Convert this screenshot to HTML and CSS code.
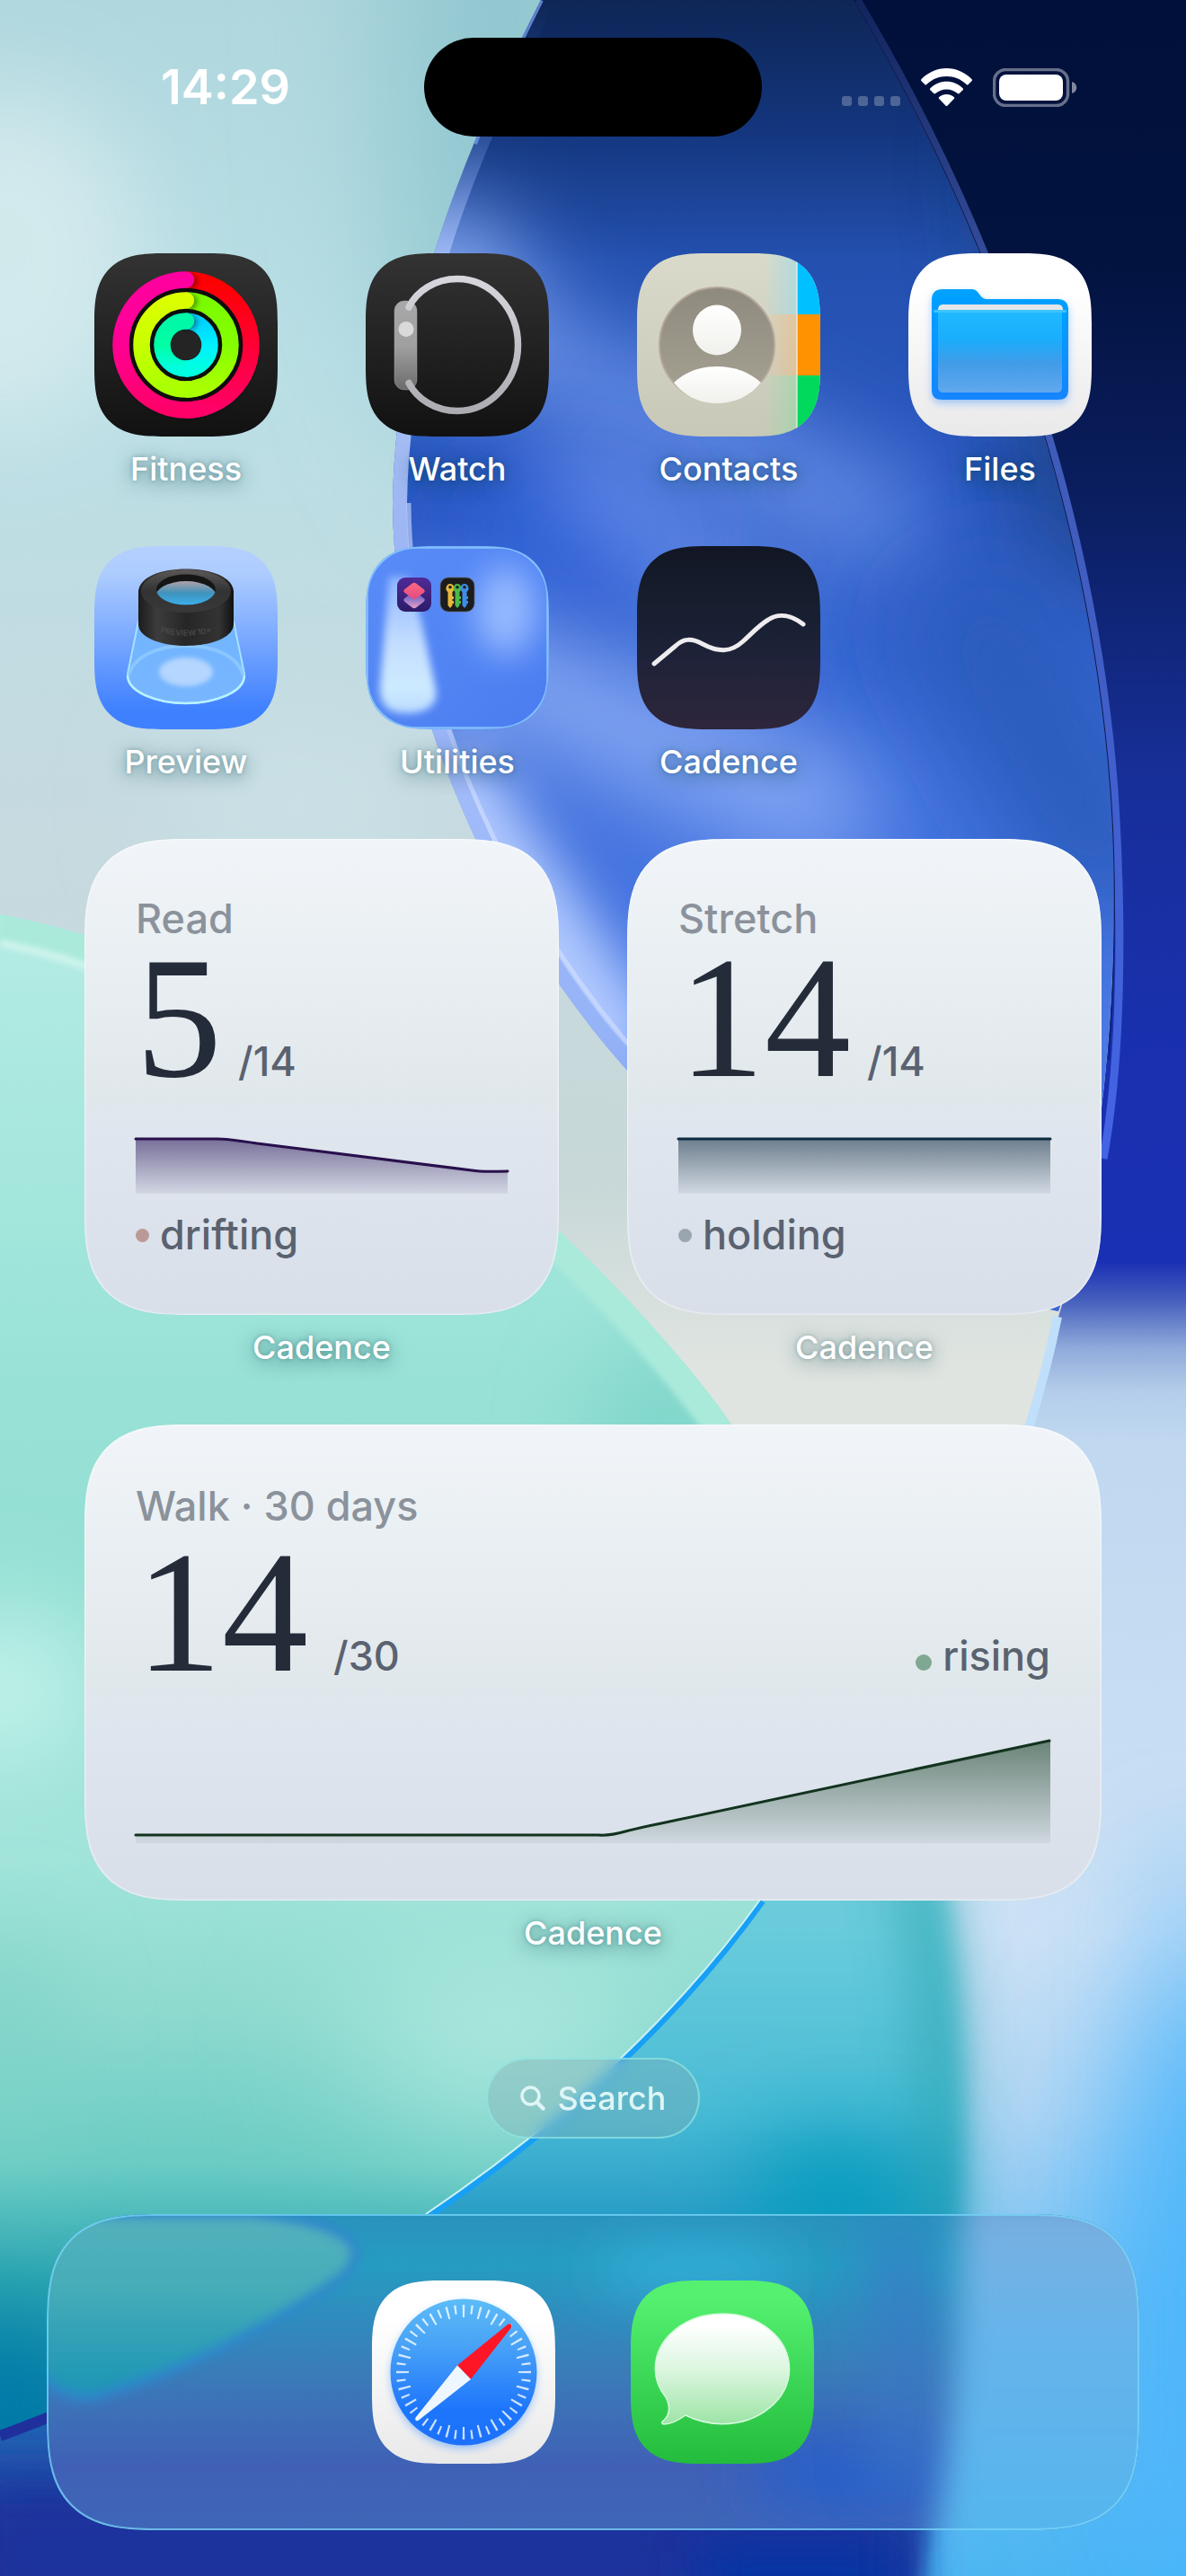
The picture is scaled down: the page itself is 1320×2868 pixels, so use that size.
FILE: index.html
```html
<!DOCTYPE html>
<html lang="en">
<head>
<meta charset="utf-8">
<meta name="viewport" content="width=device-width, initial-scale=1">
<title>Home Screen</title>
<link rel="stylesheet" href="styles.css">
</head>
<body>
<div class="screen">

<svg class="wallpaper" viewBox="0 0 1320 2868" preserveAspectRatio="none" aria-hidden="true">
  <defs>
    <linearGradient id="wBase" x1="0" y1="0" x2="0" y2="1"><stop offset="0" stop-color="#b0d7de"/><stop offset=".14" stop-color="#b9dfe5"/><stop offset=".32" stop-color="#c6dae0"/><stop offset=".46" stop-color="#c8d8d8"/><stop offset=".53" stop-color="#dfe4e0"/><stop offset="1" stop-color="#e6eae6"/></linearGradient>
    <linearGradient id="wRight" x1="0" y1="0" x2="0" y2="1"><stop offset="0" stop-color="#00103a"/><stop offset=".1" stop-color="#02133f"/><stop offset=".2" stop-color="#0b1f62"/><stop offset=".3" stop-color="#172f98"/><stop offset=".4" stop-color="#1930ae"/><stop offset=".49" stop-color="#1a30b4"/><stop offset=".505" stop-color="#4660bd"/><stop offset=".523" stop-color="#8fa9da"/><stop offset=".54" stop-color="#b4cdea"/><stop offset=".56" stop-color="#c0d8f0"/><stop offset=".75" stop-color="#cce1f5"/><stop offset=".82" stop-color="#b3d6f3"/><stop offset=".9" stop-color="#74c0f3"/><stop offset="1" stop-color="#4db6f2"/></linearGradient>
    <linearGradient id="wOval" x1="0" y1="0" x2="0" y2="1"><stop offset="0" stop-color="#0e2656"/><stop offset=".1" stop-color="#14367e"/><stop offset=".2" stop-color="#2451b0"/><stop offset=".4" stop-color="#2a58c4"/><stop offset=".6" stop-color="#3f6fdc"/><stop offset=".8" stop-color="#4c79e4"/><stop offset="1" stop-color="#3a66d4"/></linearGradient>
    <linearGradient id="wOvalRim" x1="0" y1="0" x2="0" y2="1"><stop offset="0" stop-color="#5b86e0" stop-opacity="0"/><stop offset=".12" stop-color="#7da2ee" stop-opacity=".2"/><stop offset=".28" stop-color="#c4d6ff"/><stop offset=".6" stop-color="#a9c0fa"/><stop offset="1" stop-color="#8faef6"/></linearGradient>
    <linearGradient id="wRimRight" x1="0" y1="0" x2="0" y2="1"><stop offset="0" stop-color="#12245c"/><stop offset=".3" stop-color="#3f5ab2"/><stop offset="1" stop-color="#4364e6"/></linearGradient>
    <linearGradient id="wMint" x1="0" y1="0" x2="0" y2="1"><stop offset="0" stop-color="#b5ece4"/><stop offset=".2" stop-color="#a3e6dc"/><stop offset=".32" stop-color="#98e1d6"/><stop offset=".45" stop-color="#93dfd3"/><stop offset=".62" stop-color="#a2e4da"/><stop offset=".72" stop-color="#8edacf"/><stop offset=".82" stop-color="#6accc4"/><stop offset=".9" stop-color="#27a3b0"/><stop offset="1" stop-color="#0079a6"/></linearGradient>
    <linearGradient id="wTeal" x1="0" y1="0" x2="0" y2="1"><stop offset="0" stop-color="#68c8d6"/><stop offset=".2" stop-color="#6accdc"/><stop offset=".42" stop-color="#4abcd6"/><stop offset=".6" stop-color="#1b8fc0"/><stop offset=".82" stop-color="#205cb0"/><stop offset="1" stop-color="#1b2f9c"/></linearGradient>
    <clipPath id="cOval"><path id="ovalShape" d="M602 0C520 160 440 350 437 560C438 790 560 1040 702 1196C830 1330 980 1420 1178 1460C1235 1290 1248 1040 1236 880C1212 560 1100 250 950 0Z"/></clipPath>
    <clipPath id="cMint"><path d="M0 1018C300 1072 620 1330 800 1566C960 1790 960 1960 846 2115C740 2262 600 2380 474 2465C330 2565 180 2640 0 2706Z"/></clipPath>
    <filter id="b90" filterUnits="userSpaceOnUse" x="-400" y="-400" width="2200" height="3700"><feGaussianBlur stdDeviation="80"/></filter>
    <filter id="b60" filterUnits="userSpaceOnUse" x="-300" y="-300" width="2000" height="3500"><feGaussianBlur stdDeviation="55"/></filter>
    <filter id="b30" filterUnits="userSpaceOnUse" x="-300" y="-300" width="2000" height="3500"><feGaussianBlur stdDeviation="30"/></filter>
    <filter id="b12" filterUnits="userSpaceOnUse" x="-300" y="-300" width="2000" height="3500"><feGaussianBlur stdDeviation="12"/></filter>
    <filter id="b3" filterUnits="userSpaceOnUse" x="-300" y="-300" width="2000" height="3500"><feGaussianBlur stdDeviation="3"/></filter>
  </defs>
  <rect width="1320" height="2868" fill="url(#wBase)"/>
  <ellipse cx="560" cy="100" rx="120" ry="420" fill="#8fc6cf" filter="url(#b90)"/>
  <ellipse cx="0" cy="290" rx="160" ry="190" fill="#d6ebee" filter="url(#b60)" opacity=".9"/>
  <ellipse cx="330" cy="900" rx="150" ry="100" fill="#c9e0e5" filter="url(#b60)"/>
  <path d="M950 0C1100 250 1212 560 1236 880C1248 1040 1235 1290 1178 1466C1150 1580 1090 1800 1040 2000L1000 2868H1320V0Z" fill="url(#wRight)"/>
  <path d="M1177 1466C1164 1530 1148 1580 1130 1640" fill="none" stroke="#c0dffa" stroke-width="10"/>

  <use href="#ovalShape" fill="url(#wOval)"/>
  <g clip-path="url(#cOval)">
    <path d="M430 310L1020 600" stroke="#6f97ee" stroke-width="90" filter="url(#b60)"/>
    <ellipse cx="500" cy="330" rx="60" ry="95" fill="#9dbcf8" filter="url(#b60)"/>
    <ellipse cx="640" cy="600" rx="130" ry="90" fill="#2b5bd4" filter="url(#b60)"/>
    <path d="M440 700L960 920" stroke="#8fb0f8" stroke-width="110" filter="url(#b60)"/>
    <path d="M620 500L860 700" stroke="#86a9f6" stroke-width="60" filter="url(#b60)"/>
    <path d="M480 850L700 1190" stroke="#b2caff" stroke-width="110" filter="url(#b30)"/>
    <path d="M1180 120L1240 640" stroke="#1b3f78" stroke-width="150" filter="url(#b60)" opacity=".8"/>
    <path d="M1060 640L1260 1000" stroke="#2a5cbc" stroke-width="160" filter="url(#b60)"/>
    <path d="M602 0C520 160 440 350 437 560C438 790 560 1040 702 1196" fill="none" stroke="url(#wOvalRim)" stroke-width="32" opacity=".85"/>
    <path d="M455 560C456 790 578 1030 720 1186" fill="none" stroke="#d3e0ff" stroke-width="5" opacity=".6"/>
    <path d="M602 0C580 44 552 100 528 160" fill="none" stroke="#6f98ea" stroke-width="6" opacity=".8"/>
  </g>
  <path d="M954 0C1104 250 1216 560 1240 880C1250 1030 1248 1180 1228 1290" fill="none" stroke="url(#wRimRight)" stroke-width="9"/>
  <path d="M950 0C1100 250 1212 560 1236 880C1242 960 1242 1060 1234 1180" fill="none" stroke="#0b1a4e" stroke-width="1"/>

  <ellipse cx="1380" cy="2600" rx="150" ry="420" fill="#3fb4fb" filter="url(#b90)"/>
  <path d="M1320 2050V2868" stroke="#6dbcfa" stroke-width="60" filter="url(#b60)" opacity=".6"/>
  <path d="M700 1950H1020C1060 2080 1080 2300 1070 2450C1062 2640 1040 2780 1020 2900H-60V2600Z" fill="url(#wTeal)" filter="url(#b12)"/>
  <path d="M1020 2080C1050 2200 1055 2350 1040 2500" stroke="#2fa6b0" stroke-width="50" fill="none" filter="url(#b30)" opacity=".75"/>
  <ellipse cx="930" cy="2450" rx="100" ry="70" fill="#049cbc" filter="url(#b60)"/>
  <path d="M-40 2760H1000V2920H-40Z" fill="#1b309c" filter="url(#b30)"/>
  <path d="M780 2840H1000V2920H780Z" fill="#0336a4" filter="url(#b30)"/>

  <g clip-path="url(#cMint)">
    <rect y="1000" width="1000" height="1720" fill="url(#wMint)"/>
    <ellipse cx="0" cy="1880" rx="110" ry="90" fill="#bff1e9" filter="url(#b60)"/>
    <ellipse cx="740" cy="1600" rx="70" ry="100" fill="#79d3c7" filter="url(#b60)"/>
    <ellipse cx="560" cy="2270" rx="170" ry="80" fill="#b5ece3" filter="url(#b90)"/>
    <ellipse cx="0" cy="2280" rx="50" ry="120" fill="#7ed3c7" filter="url(#b60)"/>
    <ellipse cx="0" cy="2680" rx="80" ry="90" fill="#0078a8" filter="url(#b60)"/>
    <path d="M0 1018C300 1072 620 1330 800 1566C960 1790 960 1960 846 2115" fill="none" stroke="#aaeadb" stroke-width="60" filter="url(#b3)"/>
    <path d="M0 1050C120 1074 220 1124 300 1180" fill="none" stroke="#d0f4ee" stroke-width="8" filter="url(#b3)"/>
  </g>
  <path d="M849 2117C743 2265 603 2383 477 2468" fill="none" stroke="#17a0f6" stroke-width="6"/>
  <path d="M846 2115C740 2262 600 2380 474 2465" fill="none" stroke="#c8f2f8" stroke-width="2"/>
  <path d="M0 2712C40 2697 60 2690 90 2676" fill="none" stroke="#1f309c" stroke-width="12"/>
</svg>

<header class="status">
  <time class="clock">14:29</time>
  <div class="island"></div>
  <div class="indicators">
    <svg width="65" height="43" viewBox="0 0 65 43" role="img" aria-label="No signal" fill="#fff" fill-opacity=".25"><rect y="31" width="11" height="11" rx="3"/><rect x="18" y="31" width="11" height="11" rx="3"/><rect x="36" y="31" width="11" height="11" rx="3"/><rect x="54" y="31" width="11" height="11" rx="3"/></svg>
    <svg width="57" height="43" viewBox="0 0 57 43" role="img" aria-label="Wi-Fi" fill="#fff"><path d="M.6 12C8 4.500 18 0 28.500 0S49 4.500 56.400 12C57.200 12.800 57.200 13.400 56.500 14.200L52.700 18C52 18.700 51.400 18.700 50.700 18C44.700 12.200 36.800 9 28.500 9S12.300 12.200 6.300 18C5.600 18.700 5 18.700 4.300 18L.5 14.200C-.2 13.400-.2 12.800.6 12Z"/><path d="M10.500 22.200C15.300 17.400 21.700 14.800 28.500 14.800S41.700 17.400 46.500 22.200C47.300 23 47.300 23.600 46.600 24.300L42.800 28.100C42.100 28.800 41.500 28.700 40.800 28.100C37.400 25.200 33.100 23.500 28.500 23.500S19.600 25.200 16.200 28.100C15.500 28.700 14.900 28.800 14.200 28.100L10.400 24.300C9.700 23.600 9.700 23 10.500 22.200Z"/><path d="M20.300 31.900C22.600 30 25.400 29 28.500 29S34.400 30 36.700 31.900C37.500 32.600 37.500 33.300 36.800 34L29.600 41.400C28.900 42.200 28.100 42.200 27.400 41.400L20.200 34C19.500 33.300 19.500 32.600 20.300 31.900Z"/></svg>
    <svg width="94" height="43" viewBox="0 0 94 43" role="img" aria-label="Battery full"><rect x="1.500" y="1.500" width="82" height="40" rx="13" fill="none" stroke="#fff" stroke-opacity=".4" stroke-width="3.500"/><rect x="7" y="7" width="71" height="29" rx="8" fill="#fff"/><path d="M88 15C95 17 95 26 88 28Z" fill="#fff" fill-opacity=".5"/></svg>
  </div>
</header>

<main class="home">
  <a class="app" href="#fitness">
    <svg class="icon" viewBox="0 0 204 204" aria-hidden="true">
      <defs>
        <linearGradient id="dark" x1="0" y1="0" x2="0" y2="1"><stop offset="0" stop-color="#333"/><stop offset="1" stop-color="#111"/></linearGradient>
        <linearGradient id="f1" x1="0" y1="0" x2="0" y2="1"><stop offset="0" stop-color="#f00"/><stop offset="1" stop-color="#ff0068"/></linearGradient>
        <linearGradient id="f2" x1="0" y1="0" x2="0" y2="1"><stop offset="0" stop-color="#ff00a0"/><stop offset=".5" stop-color="#ff0094"/><stop offset="1" stop-color="#ff0068"/></linearGradient>
        <linearGradient id="f3" x1="0" y1="0" x2="0" y2="1"><stop offset="0" stop-color="#7bfa00"/><stop offset=".5" stop-color="#84ff00"/><stop offset="1" stop-color="#aaff00"/></linearGradient>
        <linearGradient id="f4" x1="0" y1="0" x2="0" y2="1"><stop offset="0" stop-color="#dcff00"/><stop offset=".5" stop-color="#c8ff00"/><stop offset="1" stop-color="#aaff00"/></linearGradient>
        <linearGradient id="f5" x1="0" y1="0" x2="0" y2="1"><stop offset="0" stop-color="#00d2ff"/><stop offset=".5" stop-color="#00f0ff"/><stop offset="1" stop-color="#00ffe0"/></linearGradient>
        <linearGradient id="f6" x1="0" y1="0" x2="0" y2="1"><stop offset="0" stop-color="#00f8a8"/><stop offset=".5" stop-color="#00ffa4"/><stop offset="1" stop-color="#00ffe0"/></linearGradient>
        <filter id="ringShadow" x="-20%" y="-20%" width="140%" height="140%"><feDropShadow dx="0" dy="3" stdDeviation="4" flood-color="#000" flood-opacity=".7"/></filter>
        <filter id="capBlur" x="-60%" y="-60%" width="220%" height="220%"><feGaussianBlur stdDeviation="3"/></filter>
      </defs>
      <rect width="204" height="204" fill="url(#dark)"/>
      <circle cx="102" cy="102" r="76" fill="#0c0c0c" filter="url(#ringShadow)"/>
      <circle cx="102" cy="102" r="17" fill="#242424"/>
      <g fill="none" stroke-width="18.500">
        <path d="M102 29.500A72.500 72.500 0 0 1 102 174.500" stroke="url(#f1)"/>
        <path d="M102 52.500A49.500 49.500 0 0 1 102 151.500" stroke="url(#f3)"/>
        <path d="M102 75.500A26.500 26.500 0 0 1 102 128.500" stroke="url(#f5)"/>
      </g>
      <g fill="#000" fill-opacity=".5" filter="url(#capBlur)"><circle cx="106" cy="31" r="8"/><circle cx="106" cy="54" r="8"/><circle cx="106" cy="77" r="8"/></g>
      <g fill="none" stroke-width="18.500" stroke-linecap="round">
        <path d="M102 174.500A72.500 72.500 0 0 1 102 29.500" stroke="url(#f2)"/>
        <path d="M102 151.500A49.500 49.500 0 0 1 102 52.500" stroke="url(#f4)"/>
        <path d="M102 128.500A26.500 26.500 0 0 1 102 75.500" stroke="url(#f6)"/>
      </g>
      <g fill="none" stroke-width="18.500">
        <path d="M102 174.500A72.500 72.500 0 0 0 120 172.200" stroke="#ff0068"/>
        <path d="M102 151.500A49.500 49.500 0 0 0 120 148.100" stroke="#a8ff00"/>
        <path d="M102 128.500A26.500 26.500 0 0 0 112 126.500" stroke="#00ffe2"/>
      </g>
    </svg>
    <span class="label">Fitness</span>
  </a>

  <a class="app" href="#watch">
    <svg class="icon" viewBox="0 0 204 204" aria-hidden="true">
      <defs>
        <linearGradient id="wt1" x1="0" y1="0" x2="0" y2="1"><stop offset="0" stop-color="#a8a8a8"/><stop offset=".5" stop-color="#a0a0a0"/><stop offset="1" stop-color="#6c6c6c"/></linearGradient>
        <linearGradient id="wt2" x1="0" y1="0" x2="0" y2="1"><stop offset="0" stop-color="#d6d6dc"/><stop offset="1" stop-color="#acacb2"/></linearGradient>
      </defs>
      <rect width="204" height="204" fill="url(#dark)"/>
      <rect x="32" y="53" width="25" height="99" rx="11" fill="url(#wt1)" stroke="#b4b4b4" stroke-opacity=".4"/>
      <path d="M48 60C57 42 77 28.500 102 28.500C139 28.500 169.500 62 169.500 102S139 175.500 102 175.500C77 175.500 57 162 48 144.500" fill="none" stroke="url(#wt2)" stroke-width="7.500" stroke-linecap="round"/>
      <circle cx="45" cy="84.500" r="8.500" fill="#dadada"/>
    </svg>
    <span class="label">Watch</span>
  </a>

  <a class="app" href="#contacts">
    <svg class="icon" viewBox="0 0 204 204" aria-hidden="true">
      <defs>
        <linearGradient id="c1" x1="0" y1="0" x2="0" y2="1"><stop offset="0" stop-color="#dadaca"/><stop offset="1" stop-color="#c8c8b8"/></linearGradient>
        <linearGradient id="c2" x1="0" y1="0" x2="0" y2="1"><stop offset="0" stop-color="#8f8a7e"/><stop offset="1" stop-color="#a6a293"/></linearGradient>
        <linearGradient id="c3" x1="0" y1="0" x2="0" y2="1"><stop offset="0" stop-color="#fff"/><stop offset="1" stop-color="#f0f0ec"/></linearGradient>
        <linearGradient id="cb" x1="0" y1="0" x2="1" y2="0"><stop offset="0" stop-color="#8fe0ec" stop-opacity="0"/><stop offset="1" stop-color="#8fdcec" stop-opacity=".5"/></linearGradient>
        <linearGradient id="co" x1="0" y1="0" x2="1" y2="0"><stop offset="0" stop-color="#f0b878" stop-opacity="0"/><stop offset="1" stop-color="#f0b878" stop-opacity=".5"/></linearGradient>
        <linearGradient id="cg" x1="0" y1="0" x2="1" y2="0"><stop offset="0" stop-color="#88e0a0" stop-opacity="0"/><stop offset="1" stop-color="#88dca0" stop-opacity=".5"/></linearGradient>
      </defs>
      <rect width="204" height="204" fill="url(#c1)"/>
      <rect x="140" width="38" height="68" fill="url(#cb)"/><rect x="140" y="68" width="38" height="68" fill="url(#co)"/><rect x="140" y="136" width="38" height="68" fill="url(#cg)"/>
      <rect x="178" width="26" height="68" fill="#00c0ff"/><rect x="178" y="68" width="26" height="68" fill="#ff9200"/><rect x="178" y="136" width="26" height="68" fill="#00d95c"/>
      <rect x="177" width="2" height="204" fill="#fff" opacity=".5"/>
      <circle cx="89" cy="102" r="64" fill="url(#c2)" stroke="#b5a89c" stroke-width="2"/>
      <ellipse cx="89" cy="85.500" rx="27" ry="28" fill="url(#c3)"/>
      <path d="M41 144C54 132 70 126 89 126S125 132 138 144C126 159 109 167 89 167S53 159 41 144Z" fill="url(#c3)"/>
    </svg>
    <span class="label">Contacts</span>
  </a>

  <a class="app" href="#files">
    <svg class="icon" viewBox="0 0 204 204" aria-hidden="true">
      <defs>
        <linearGradient id="white" x1="0" y1="0" x2="0" y2="1"><stop offset=".2" stop-color="#fff"/><stop offset="1" stop-color="#e9e9ea"/></linearGradient>
        <linearGradient id="fi1" x1="0" y1="0" x2="0" y2="1"><stop offset="0" stop-color="#00a2ff"/><stop offset="1" stop-color="#1485ff"/></linearGradient>
        <linearGradient id="fi2" x1="0" y1="0" x2="0" y2="1"><stop offset="0" stop-color="#20baff"/><stop offset=".35" stop-color="#1aadfc"/><stop offset=".65" stop-color="#429ce8"/><stop offset="1" stop-color="#60a8ee"/></linearGradient>
        <filter id="blueShadow" x="-20%" y="-20%" width="140%" height="150%"><feDropShadow dx="0" dy="4" stdDeviation="4" flood-color="#2080ff" flood-opacity=".4"/></filter>
      </defs>
      <rect width="204" height="204" fill="url(#white)"/>
      <path d="M26 52C26 44 30 40 38 40H70C80 40 78 51 88 51H166C174 51 178 55 178 63V152C178 160 174 163 166 163H38C30 163 26 160 26 152Z" fill="url(#fi1)" filter="url(#blueShadow)"/>
      <path d="M33 63C33 59 35 57 39 57H166C170 57 172 59 172 63Z" fill="#e4e6e8"/>
      <path d="M29 64H175V150C175 156 172 158 167 158H37C32 158 29 156 29 150Z" fill="url(#fi1)"/>
      <path d="M33 64H171V149C171 153 169 155 165 155H39C35 155 33 153 33 149Z" fill="url(#fi2)"/>
      <rect x="28" y="63" width="148" height="3" rx="1.500" fill="#3cc4ff"/>
    </svg>
    <span class="label">Files</span>
  </a>

  <a class="app" href="#preview">
    <svg class="icon" viewBox="0 0 204 204" aria-hidden="true">
      <defs>
        <linearGradient id="p1" x1="0" y1="0" x2="0" y2="1"><stop offset="0" stop-color="#b4d0ff"/><stop offset=".15" stop-color="#adccff"/><stop offset=".9" stop-color="#3f80ff"/></linearGradient>
        <linearGradient id="p2" x1="0" y1="0" x2="0" y2="1"><stop offset="0" stop-color="#72b4ff"/><stop offset="1" stop-color="#78b6ff"/></linearGradient>
        <linearGradient id="p3" x1="0" y1="0" x2="1" y2="0"><stop offset="0" stop-color="#1c1c1c"/><stop offset=".2" stop-color="#3c3c3c"/><stop offset=".5" stop-color="#262626"/><stop offset=".85" stop-color="#333"/><stop offset="1" stop-color="#111"/></linearGradient>
        <linearGradient id="p4" x1="0" y1="0" x2="0" y2="1"><stop offset="0" stop-color="#5c5858"/><stop offset=".5" stop-color="#333"/><stop offset="1" stop-color="#3a3838"/></linearGradient>
        <linearGradient id="p5" x1="0" y1="0" x2="0" y2="1"><stop offset="0" stop-color="#b0a0a8"/><stop offset=".35" stop-color="#3f93bc"/><stop offset=".8" stop-color="#3cb8f8"/></linearGradient>
        <filter id="soft"><feGaussianBlur stdDeviation="2.500"/></filter>
        <clipPath id="pHole"><ellipse cx="102" cy="48.500" rx="33" ry="17"/></clipPath>
        <path id="pArc" d="M64 93Q102 107 140 93"/>
      </defs>
      <rect width="204" height="204" fill="url(#p1)"/>
      <path d="M49 84L37 142C36 162 70 175 102 175S168 162 167 142L155 84Z" fill="url(#p2)" stroke="#a4e2ff" stroke-width="2"/>
      <path d="M37 144C37 163 70 175 102 175S167 163 167 144" fill="none" stroke="#b8f2ff" stroke-width="2.500"/>
      <path d="M38 144C44 122 72 111 102 111S160 122 166 144" fill="none" stroke="#9ad2ff" stroke-width="4" opacity=".6"/>
      <ellipse cx="102" cy="140" rx="30" ry="16" fill="#b4d6ff" filter="url(#soft)"/>
      <path d="M49 50C51 34 74 25.500 102 25.500S153 34 155 50V87C155 101 132 111 102 111S49 101 49 87Z" fill="url(#p3)"/>
      <ellipse cx="102" cy="50" rx="50" ry="24" fill="url(#p4)"/>
      <ellipse cx="102" cy="48.500" rx="33" ry="17" fill="#151515"/>
      <g clip-path="url(#pHole)"><ellipse cx="102" cy="58" rx="35" ry="19" fill="url(#p5)"/></g>
      <text class="engraving"><textPath href="#pArc" startOffset="50%" text-anchor="middle">PREVIEW 10×</textPath></text>
    </svg>
    <span class="label">Preview</span>
  </a>

  <a class="app" href="#utilities">
    <svg class="icon" viewBox="0 0 204 204" aria-hidden="true">
      <defs>
        <linearGradient id="u1" x1="0" y1="0" x2="1" y2="1"><stop offset="0" stop-color="#5a8cf8"/><stop offset=".5" stop-color="#5285f4"/><stop offset="1" stop-color="#4c7cf0"/></linearGradient>
        <linearGradient id="u2" x1="0" y1="0" x2="0" y2="1"><stop offset="0" stop-color="#8fb6ff"/><stop offset=".5" stop-color="#c4deff"/><stop offset=".8" stop-color="#cdeaff"/><stop offset="1" stop-color="#bcdcff"/></linearGradient>
        <linearGradient id="u3" x1="0" y1="0" x2="0" y2="1"><stop offset="0" stop-color="#502a98"/><stop offset="1" stop-color="#2c1c68"/></linearGradient>
        <linearGradient id="u4" x1="0" y1="0" x2="1" y2="1"><stop offset="0" stop-color="#ff6a80"/><stop offset="1" stop-color="#e04880"/></linearGradient>
        <linearGradient id="u5" x1="0" y1="0" x2="1" y2="1"><stop offset="0" stop-color="#3d54c8"/><stop offset="1" stop-color="#f0a0c8"/></linearGradient>
        <filter id="soft2" x="-40%" y="-40%" width="180%" height="180%"><feGaussianBlur stdDeviation="4"/></filter>
        <filter id="soft3" filterUnits="userSpaceOnUse" x="-60" y="-60" width="340" height="340"><feGaussianBlur stdDeviation="18"/></filter>
        <g id="key"><path fill-rule="evenodd" d="M0-6A5 5 0 0 1 2.500 3V18L0 21L-2.500 18V3A5 5 0 0 1 0-6ZM0-4A1.800 1.800 0 1 0 0-.4A1.800 1.800 0 1 0 0-4Z"/><path d="M2 8H4V11H2ZM2 13H4V16H2Z"/></g>
      </defs>
      <rect width="204" height="204" fill="url(#u1)"/>
      <ellipse cx="156" cy="72" rx="34" ry="50" fill="#96baff" filter="url(#soft3)"/>
      <path d="M26 34H48L62 84L78 160C81 178 66 186 46 186C24 186 15 176 16 156L22 84Z" fill="url(#u2)" filter="url(#soft2)"/>
      <rect x="1.500" y="1.500" width="201" height="201" rx="55" fill="none" stroke="#8ed0ff" stroke-width="2.500" opacity=".8"/>
      <rect x="35" y="35" width="38" height="38" rx="9" fill="url(#u3)"/>
      <rect x="-8" y="-8" width="16" height="16" rx="3" transform="translate(54 60) scale(1.150 .9) rotate(45)" fill="url(#u5)"/>
      <rect x="-8" y="-8" width="16" height="16" rx="3" transform="translate(54 50) scale(1.150 .9) rotate(45)" fill="url(#u4)"/>
      <rect x="83" y="35" width="38" height="38" rx="9" fill="#1c1c1c" stroke="#666" stroke-width=".7"/>
      <use href="#key" transform="translate(94 48)" fill="#e8b93c"/><use href="#key" transform="translate(102 48)" fill="#4cb848"/><use href="#key" transform="translate(110 48)" fill="#3d8ce8"/>
    </svg>
    <span class="label">Utilities</span>
  </a>

  <a class="app" href="#cadence">
    <svg class="icon" viewBox="0 0 204 204" aria-hidden="true">
      <defs><linearGradient id="cd" x1="0" y1="0" x2="0" y2="1"><stop offset="0" stop-color="#121624"/><stop offset=".3" stop-color="#161e2e"/><stop offset=".6" stop-color="#1e2238"/><stop offset="1" stop-color="#2e263c"/></linearGradient></defs>
      <rect width="204" height="204" fill="url(#cd)"/>
      <path d="M19 131L43 111C52 103 60 102 73 109C90 118 104 119 118 106C130 95 136 88 146 82C158 74 172 77 185 87" fill="none" stroke="#eeecee" stroke-width="5" stroke-linecap="round" stroke-linejoin="round"/>
    </svg>
    <span class="label">Cadence</span>
  </a>

  <section class="widget-cell">
    <article class="widget">
      <h2 class="habit">Read</h2>
      <p class="score"><span class="count">5</span><span class="detail">/14</span></p>
      <svg class="chart" viewBox="0 0 414 64" preserveAspectRatio="none" aria-hidden="true">
        <defs><linearGradient id="g1" x1="0" y1="0" x2="0" y2="1"><stop offset="0" stop-color="#2e1a5c" stop-opacity=".58"/><stop offset="1" stop-color="#2e1a5c" stop-opacity=".06"/></linearGradient></defs>
        <path d="M0 3H90Q112 3 135 8L374 38Q384 40 414 39V64H0Z" fill="url(#g1)"/>
        <path d="M0 3H90Q105 3 135 8L374 38Q384 40 414 39" fill="none" stroke="#28104c" stroke-width="3" stroke-linecap="round"/>
      </svg>
      <p class="trend"><i class="dot dot-drifting"></i>drifting</p>
    </article>
    <span class="label">Cadence</span>
  </section>

  <section class="widget-cell">
    <article class="widget">
      <h2 class="habit">Stretch</h2>
      <p class="score"><span class="count">14</span><span class="detail">/14</span></p>
      <svg class="chart" viewBox="0 0 414 64" preserveAspectRatio="none" aria-hidden="true">
        <defs><linearGradient id="g2" x1="0" y1="0" x2="0" y2="1"><stop offset="0" stop-color="#1a3346" stop-opacity=".58"/><stop offset="1" stop-color="#1a3346" stop-opacity=".06"/></linearGradient></defs>
        <path d="M0 3H414V64H0Z" fill="url(#g2)"/>
        <path d="M0 3H414" fill="none" stroke="#0f2b40" stroke-width="3" stroke-linecap="round"/>
      </svg>
      <p class="trend"><i class="dot dot-holding"></i>holding</p>
    </article>
    <span class="label">Cadence</span>
  </section>

  <section class="widget-cell wide">
    <article class="widget">
      <h2 class="habit">Walk · 30 days</h2>
      <div class="summary">
        <p class="score"><span class="count">14</span><span class="detail">/30</span></p>
        <p class="trend"><i class="dot dot-rising"></i>rising</p>
      </div>
      <svg class="chart" viewBox="0 0 1018 118" preserveAspectRatio="none" aria-hidden="true">
        <defs><linearGradient id="g3" x1="0" y1="0" x2="0" y2="1"><stop offset="0" stop-color="#1c4228" stop-opacity=".6"/><stop offset="1" stop-color="#1c4228" stop-opacity=".06"/></linearGradient></defs>
        <path d="M0 109H515Q530 109 550 103L1018 4V118H0Z" fill="url(#g3)"/>
        <path d="M0 109H515Q528 110 545 105C560 101 570 99 585 96L1017 4" fill="none" stroke="#12331e" stroke-width="3" stroke-linecap="round"/>
      </svg>
    </article>
    <span class="label">Cadence</span>
  </section>
</main>

<button class="search" type="button">
  <svg width="28" height="28" viewBox="0 0 28 28" fill="none" stroke="currentColor" stroke-linecap="round" aria-hidden="true"><circle cx="11.500" cy="11.500" r="9.500" stroke-width="3.500"/><path d="M19 19L25.500 25.500" stroke-width="4.500"/></svg>
  Search
</button>

<nav class="dock" aria-label="Dock">
  <svg class="dock-glass" viewBox="0 0 1216 352" preserveAspectRatio="none" aria-hidden="true">
    <defs>
      <linearGradient id="d1" x1="0" y1="0" x2="0" y2="1"><stop offset="0" stop-color="#2a92bd"/><stop offset=".16" stop-color="#269cc2"/><stop offset=".5" stop-color="#3a7cb8"/><stop offset=".8" stop-color="#4060b6"/><stop offset="1" stop-color="#3f66b8"/></linearGradient>
      <linearGradient id="d2" x1="0" y1="0" x2="0" y2="1"><stop offset="0" stop-color="#54b2bc"/><stop offset=".4" stop-color="#46acb8"/><stop offset="1" stop-color="#1a94b4"/></linearGradient>
      <linearGradient id="d3" x1="0" y1="0" x2="0" y2="1"><stop offset="0" stop-color="#5d8cc0"/><stop offset=".15" stop-color="#78b0e2"/><stop offset=".4" stop-color="#66b4ea"/><stop offset="1" stop-color="#50b6ee"/></linearGradient>
      <filter id="db6" filterUnits="userSpaceOnUse" x="-100" y="-100" width="1416" height="552"><feGaussianBlur stdDeviation="6"/></filter>
      <filter id="db18" filterUnits="userSpaceOnUse" x="-100" y="-100" width="1516" height="652"><feGaussianBlur stdDeviation="18"/></filter>
    </defs>
    <rect width="1216" height="352" fill="url(#d1)"/>
    <ellipse cx="720" cy="62" rx="110" ry="24" fill="#35b2dc" filter="url(#b30)"/>
    <ellipse cx="900" cy="290" rx="120" ry="50" fill="#2a60c8" filter="url(#b30)"/>
    <path d="M940 20C960 100 960 200 950 300" stroke="#3a78c8" stroke-width="70" fill="none" filter="url(#b30)" opacity=".7"/>
    <path d="M1022-60H1280V420H980C1000 280 1010 200 1014 120Z" fill="url(#d3)" filter="url(#db18)"/>
    <path d="M-20 0H230C340 10 370 40 320 76C240 130 140 180 50 204C20 206-4 190-20 160Z" fill="url(#d2)" stroke="#2d86cc" stroke-width="10" filter="url(#db6)"/>
  </svg>
  <a class="dock-app" href="#safari" aria-label="Safari">
    <svg class="icon" viewBox="0 0 204 204" aria-hidden="true">
      <defs><linearGradient id="s1" x1="0" y1="0" x2="0" y2="1"><stop offset="0" stop-color="#5cbcf8"/><stop offset=".3" stop-color="#4aa4f6"/><stop offset=".75" stop-color="#1f76fc"/><stop offset="1" stop-color="#1a70fa"/></linearGradient></defs>
      <rect width="204" height="204" fill="url(#white)"/>
      <circle cx="102" cy="102" r="81.500" fill="url(#s1)" filter="url(#blueShadow)"/>
      <g fill="none" stroke="#fff" stroke-opacity=".78">
        <circle cx="102" cy="102" r="68" stroke-width="14" pathLength="240" stroke-dasharray="1.300 8.700" stroke-dashoffset=".65"/>
        <circle cx="102" cy="102" r="70" stroke-width="10" pathLength="240" stroke-dasharray="1.200 8.800" stroke-dashoffset="-4.400"/>
      </g>
      <path d="M95 94.500L151 49C154 47 156.500 49.500 154.500 53L110 110Z" fill="#ff1626"/>
      <path d="M95 94.500L110 110L52 155.500C49.500 157.500 47 155 49 152Z" fill="#eef6ff"/>
    </svg>
  </a>
  <a class="dock-app" href="#messages" aria-label="Messages">
    <svg class="icon" viewBox="0 0 204 204" aria-hidden="true">
      <defs>
        <linearGradient id="m1" x1="0" y1="0" x2="0" y2="1"><stop offset=".1" stop-color="#54f070"/><stop offset="1" stop-color="#23bc3c"/></linearGradient>
        <linearGradient id="m2" x1="0" y1="0" x2="0" y2="1"><stop offset=".1" stop-color="#fff"/><stop offset=".5" stop-color="#dcf6e0"/><stop offset="1" stop-color="#9de4a6"/></linearGradient>
      </defs>
      <rect width="204" height="204" fill="url(#m1)"/>
      <path d="M102 37C143 37 176.500 64 176.500 98.500C176.500 132 143 159.700 102 159.700C87 159.700 73 156 61 150C54 155 46 160 37 160C34 160 34 157.500 36.500 156C43 150 45 142 39 130C31 120 27.300 110 27.300 98.500C27.300 64 61 37 102 37Z" fill="url(#m2)" stroke="#d4fadc" stroke-width="1.500"/>
    </svg>
  </a>
</nav>

</div>
</body>
</html>
```

FILE: styles.css
```css
* { box-sizing: border-box; }

body {
  margin: 0;
  font-family: Inter, "Liberation Sans", sans-serif;
  font-weight: 500;
  color: #fff;
  background: #1b309c;
}

h2, p { margin: 0; font: inherit; }
a { color: inherit; text-decoration: none; }

.screen {
  position: relative;
  display: flex;
  flex-direction: column;
  min-height: 100vh;
  padding: 42px 0 51px;
  isolation: isolate;
  overflow: hidden;
}

.wallpaper {
  position: absolute;
  inset: 0;
  z-index: -1;
  width: 100%;
  height: 100%;
}

/* Status bar */
.status {
  display: grid;
  grid-template-columns: 1fr 376px 1fr;
  align-items: center;
  padding: 0 30px;
}

.clock {
  justify-self: center;
  font-size: 54px;
  line-height: 64px;
  font-weight: 600;
}

.island {
  height: 110px;
  border-radius: 55px;
  background: #000;
}

.indicators {
  display: flex;
  justify-content: flex-end;
  gap: 23px;
  padding-right: 91px;
}

/* Home grid */
.home {
  display: grid;
  grid-template-columns: repeat(4, 1fr);
  row-gap: 64px;
  padding: 130px 56px 0;
}

.app, .widget-cell {
  display: flex;
  flex-direction: column;
  align-items: center;
  gap: 14px;
}

.icon {
  display: block;
  width: 204px;
  height: 204px;
  border-radius: 56px;
}

.label {
  font-size: 36px;
  line-height: 44px;
  text-shadow: 0 4px 20px rgba(0, 70, 80, .6), 0 0 5px rgba(0, 60, 70, .3);
}

.engraving {
  font-size: 9px;
  fill: #4c4c4c;
}

/* Widgets */
.widget-cell {
  grid-column: span 2;
  padding: 0 38px;
}

.widget-cell.wide { grid-column: 1 / -1; }

.widget {
  display: flex;
  flex-direction: column;
  width: 100%;
  min-height: 530px;
  padding: 62px 57px;
  border-radius: 86px;
  background: linear-gradient(#f1f5f9, #e1e8eb 53%, #dfe6ee 60%, #d8dfe9);
  box-shadow: inset 0 0 2px 1px rgba(255, 255, 255, .6);
  font-size: 45px;
  line-height: 54px;
  color: #5a6270;
}

@supports (corner-shape: squircle) {
  .icon { border-radius: 78px; corner-shape: superellipse(1.5); }
  .widget { border-radius: 116px; corner-shape: superellipse(1.5); }
  .dock { border-radius: 180px; corner-shape: superellipse(1.5); }
}

.habit { color: #8b929b; }

.score {
  display: flex;
  align-items: baseline;
  gap: 18px;
  margin-top: 4px;
}

.count {
  font: 192px/160px "Liberation Serif", serif;
  color: #242c3a;
}

.chart {
  display: block;
  width: 100%;
  height: 64px;
  margin-top: auto;
  overflow: visible;
}

.trend {
  display: flex;
  align-items: center;
  gap: 12px;
  margin-top: 19px;
}

.dot {
  width: 15px;
  height: 15px;
  border-radius: 50%;
}

.dot-drifting { background: #ba9a97; }
.dot-holding { background: #9ba5b0; }
.dot-rising { width: 18px; height: 18px; background: #80a792; }

.summary {
  display: flex;
  justify-content: space-between;
  align-items: baseline;
  margin-top: 8px;
}

.wide .widget { padding: 64px 57px; }
.wide .score { gap: 28px; }
.wide .trend { align-items: baseline; margin: 0; }
.wide .chart { height: 118px; }

/* Search pill */
.search {
  display: flex;
  align-items: center;
  gap: 14px;
  align-self: center;
  height: 90px;
  margin: 117px 0 84px;
  padding: 0 36px;
  border: 2px solid rgba(150, 240, 235, .6);
  border-radius: 45px;
  background: rgba(130, 170, 180, .38);
  backdrop-filter: blur(8px);
  font: inherit;
  font-size: 36px;
  line-height: 44px;
  color: #dff5f5;
}

/* Dock */
.dock {
  position: relative;
  display: flex;
  justify-content: center;
  gap: 84px;
  margin: auto 52px 0;
  padding: 74px;
  border-radius: 124px;
  overflow: hidden;
  isolation: isolate;
}

.dock::after {
  content: "";
  position: absolute;
  inset: 0;
  border: 2px solid rgba(120, 215, 250, .75);
  border-radius: inherit;
  corner-shape: inherit;
  pointer-events: none;
}

.dock-glass {
  position: absolute;
  inset: 0;
  z-index: -1;
  width: 100%;
  height: 100%;
}
```
